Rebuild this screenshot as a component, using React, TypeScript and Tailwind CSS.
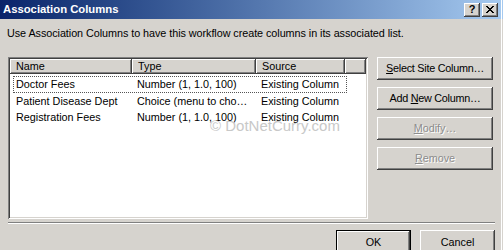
import React from "react";

const raised =
  "shadow-[inset_-1px_-1px_#404040,inset_1px_1px_#ffffff,inset_-2px_-2px_#808080,inset_2px_2px_#d6d3ce]";

function Btn({
  children,
  disabled,
  className = "",
}: {
  children: React.ReactNode;
  disabled?: boolean;
  className?: string;
}) {
  return (
    <div
      className={`flex items-center justify-center bg-[#d6d3ce] ${raised} ${
        disabled
          ? "text-[#8c8c8c] [text-shadow:1px_1px_0_#ffffff]"
          : "text-black"
      } ${className}`}
    >
      {children}
    </div>
  );
}

const rows = [
  ["Doctor Fees", "Number (1, 1.0, 100)", "Existing Column"],
  ["Patient Disease Dept", "Choice (menu to cho…", "Existing Column"],
  ["Registration Fees", "Number (1, 1.0, 100)", "Existing Column"],
];

export default function App() {
  return (
    <div
      className="relative w-[503px] h-[250px] overflow-hidden bg-[#d6d3ce] text-[10.8px] text-black"
      style={{ fontFamily: '"Liberation Sans", Arial, sans-serif' }}
    >
      {/* Title bar */}
      <div className="h-[19px] flex items-center justify-between pl-[3px] pr-[5px] bg-gradient-to-r from-[#0a246a] to-[#a6caf0]">
        <span className="text-white font-bold text-[11.3px] leading-none">
          Association Columns
        </span>
        <div className="flex gap-[2px]">
          <div
            className={`w-[16px] h-[14px] flex items-center justify-center bg-[#d6d3ce] ${raised} text-[11px] font-bold leading-none`}
          >
            ?
          </div>
          <div
            className={`w-[16px] h-[14px] flex items-center justify-center bg-[#d6d3ce] ${raised}`}
          >
            <svg width="8" height="7" viewBox="0 0 8 7">
              <path d="M0 0 L7 7 M1 0 L8 7 M7 0 L0 7 M8 0 L1 7" stroke="#000" strokeWidth="1" />
            </svg>
          </div>
        </div>
      </div>

      {/* Description */}
      <div className="pl-[7px] pt-[8px] h-[38px] leading-[13px] tracking-[-0.05px]">
        Use Association Columns to have this workflow create columns in its associated list.
      </div>

      {/* Main */}
      <div className="flex pl-[8px]">
        <div className="w-[360px] h-[162px] bg-white p-[2px] shadow-[inset_1px_1px_#808080,inset_-1px_-1px_#ffffff,inset_2px_2px_#404040,inset_-2px_-2px_#d6d3ce]">
          <div className="flex h-[15px] leading-[15px]">
            <div className={`w-[122px] pl-[6px] bg-[#d6d3ce] ${raised}`}>Name</div>
            <div className={`w-[124px] pl-[6px] bg-[#d6d3ce] ${raised}`}>Type</div>
            <div className={`w-[89px] pl-[6px] bg-[#d6d3ce] ${raised}`}>Source</div>
            <div className={`flex-1 bg-[#d6d3ce] ${raised}`}></div>
          </div>
          <div className="pt-[2px]">
            {rows.map((r, i) => (
              <div key={i} className="flex h-[16.5px] leading-[15px] pl-[3px]">
                <div
                  className={`flex w-[334px] border border-dotted ${
                    i === 0 ? "border-[#555]" : "border-transparent"
                  }`}
                >
                  <div className="w-[121px] pl-[2px] whitespace-nowrap">{r[0]}</div>
                  <div className="w-[124px] pl-[2px] whitespace-nowrap">{r[1]}</div>
                  <div className="flex-1 pl-[2px] whitespace-nowrap">{r[2]}</div>
                </div>
              </div>
            ))}
          </div>
        </div>

        <div className="ml-[9px] w-[116px] flex flex-col">
          <Btn className="h-[23px] tracking-[-0.25px]">
            <span>
              <u>S</u>elect Site Column…
            </span>
          </Btn>
          <Btn className="h-[23px] mt-[7px] tracking-[-0.25px]">
            <span>
              Add <u>N</u>ew Column…
            </span>
          </Btn>
          <Btn disabled className="h-[23px] mt-[7px]">
            <span>
              <u>M</u>odify…
            </span>
          </Btn>
          <Btn disabled className="h-[23px] mt-[7px]">
            <span>
              <u>R</u>emove
            </span>
          </Btn>
        </div>
      </div>

      {/* Separator */}
      <div className="ml-[8px] mr-[8px] mt-[3px] h-[2px] border-t border-[#808080] border-b border-b-white"></div>

      {/* Bottom buttons */}
      <div className="flex justify-end gap-[9px] pr-[8px] mt-[6px]">
        <div className="border border-black">
          <Btn className="w-[73px] h-[22px]">OK</Btn>
        </div>
        <Btn className="w-[75px] h-[24px]">Cancel</Btn>
      </div>

      {/* Watermark */}
      <div className="absolute left-[210px] top-[115px] text-[15px] text-[#c8c8c8] [text-shadow:1px_1px_0_#ffffff] whitespace-nowrap">
        © DotNetCurry.com
      </div>

      {/* Right frame edge */}
      <div className="absolute right-0 top-0 h-full w-[2px] border-l border-white"></div>
    </div>
  );
}
